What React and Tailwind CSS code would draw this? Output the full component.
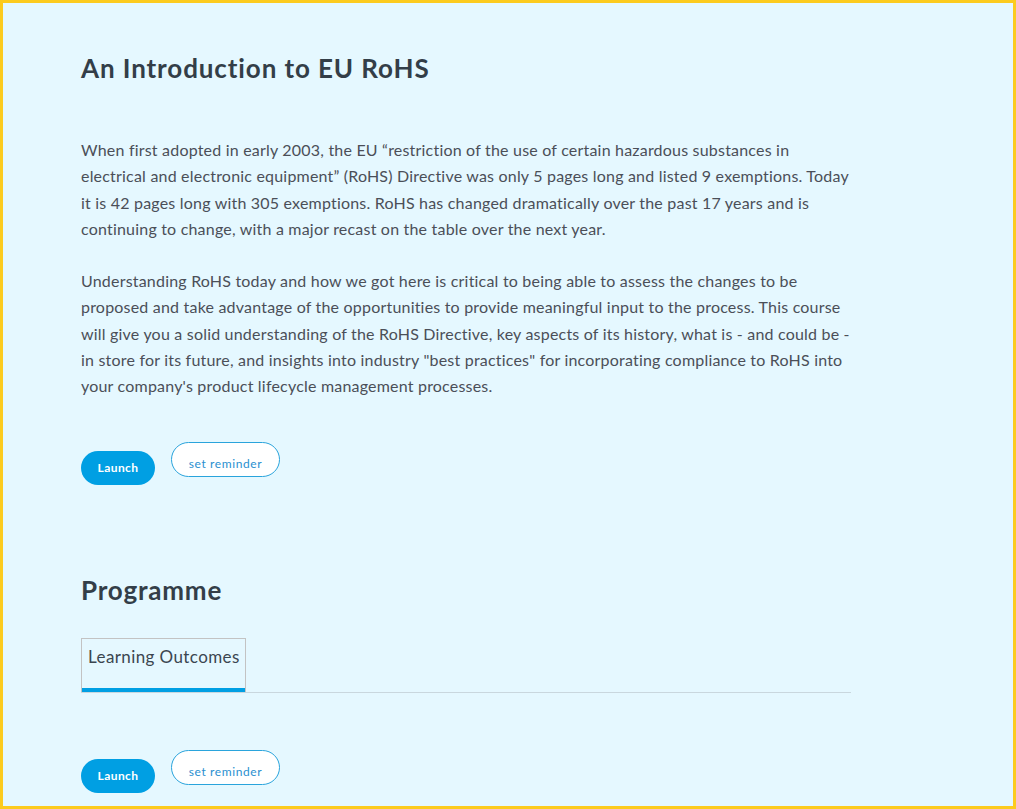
const para1 = [
  'When first adopted in early 2003, the EU “restriction of the use of certain hazardous substances in',
  'electrical and electronic equipment” (RoHS) Directive was only 5 pages long and listed 9 exemptions. Today',
  'it is 42 pages long with 305 exemptions. RoHS has changed dramatically over the past 17 years and is',
  'continuing to change, with a major recast on the table over the next year.',
]

const para2 = [
  'Understanding RoHS today and how we got here is critical to being able to assess the changes to be',
  'proposed and take advantage of the opportunities to provide meaningful input to the process. This course',
  'will give you a solid understanding of the RoHS Directive, key aspects of its history, what is - and could be -',
  'in store for its future, and insights into industry "best practices" for incorporating compliance to RoHS into',
  "your company's product lifecycle management processes.",
]

function Actions() {
  return (
    <div className="flex items-start gap-4">
      <button className="mt-[9px] h-[34px] w-[74px] rounded-full bg-[#009fe3] text-[12px] font-bold tracking-[0.4px] text-white">
        Launch
      </button>
      <button className="h-[35px] w-[109px] rounded-full border border-[#2aa4dc] bg-white pt-[9px] text-[12px] tracking-[0.6px] text-[#2a8fd0]">
        set reminder
      </button>
    </div>
  )
}

export default function App() {
  return (
    <div className="h-[809px] w-[1016px] overflow-hidden border-[3px] border-[#fccb1e] bg-[#e5f8ff] font-['Lato','Liberation_Sans',sans-serif]">
      <div className="w-[848px] pl-[78px]">
        <h1 className="mt-[49px] text-[26px] font-bold leading-[32px] tracking-[0.9px] text-[#333e48]">
          An Introduction to EU RoHS
        </h1>

        <div className="mt-[53px] text-[16px] leading-[26.3px] tracking-[0.2px] text-[#4b4f58]">
          <p>{para1.map(l => <span key={l} className="block whitespace-nowrap">{l}</span>)}</p>
          <p className="mt-[26px]">{para2.map(l => <span key={l} className="block whitespace-nowrap">{l}</span>)}</p>
        </div>

        <div className="mt-[42px]">
          <Actions />
        </div>

        <h2 className="mt-[89px] text-[26px] font-bold leading-[32px] tracking-[0.8px] text-[#333e48]">Programme</h2>

        <div className="mt-[32px] border-b border-[#c9d7de]">
          <div className="flex h-[54px] w-[165px] flex-col justify-between border border-b-0 border-[#c3c3c3]">
            <span className="pl-[6px] pt-[8px] text-[17px] leading-[20px] tracking-[0.4px] text-[#3b4650]">Learning Outcomes</span>
            <div className="h-[4px] bg-[#009fe3]" />
          </div>
        </div>

        <div className="mt-[57px]">
          <Actions />
        </div>
      </div>
    </div>
  )
}
